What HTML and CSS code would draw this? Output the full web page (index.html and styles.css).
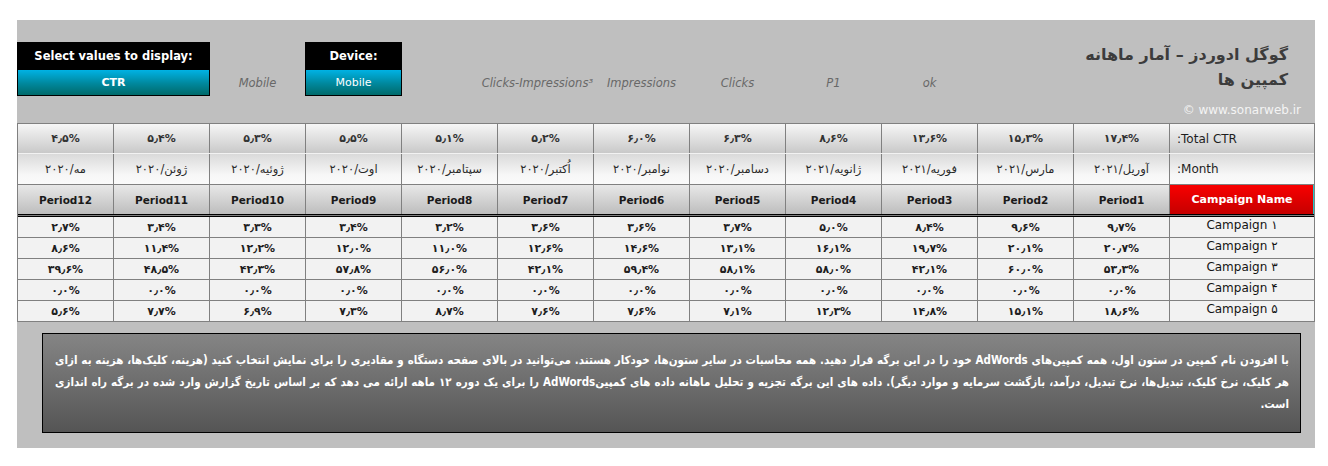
FILE: index.html
```html
<!DOCTYPE html>
<html lang="fa">
<head>
<meta charset="utf-8">
<title>گوگل ادوردز – آمار ماهانه کمپین ها</title>
<link rel="stylesheet" href="styles.css">
</head>
<body>
<div class="sheet">
  <div class="top" dir="rtl">
    <div class="title">گوگل ادوردز – آمار ماهانه<br>کمپین ها</div>
    <div class="copy" dir="ltr">© www.sonarweb.ir</div>
    <div class="lbl col-4">ok</div>
    <div class="lbl col-5">P1</div>
    <div class="lbl col-6">Clicks</div>
    <div class="lbl col-7">Impressions</div>
    <div class="lbl col-8" dir="rtl"><span dir="ltr">Clicks-Impressions³</span></div>
    <div class="ctl ctl-device" dir="ltr">
      <div class="ctl-h">Device:</div>
      <div class="ctl-v ctl-v-reg">Mobile</div>
    </div>
    <div class="lbl col-11">Mobile</div>
    <div class="ctl ctl-select" dir="ltr">
      <div class="ctl-h">Select values to display:</div>
      <div class="ctl-v">CTR</div>
    </div>
  </div>

  <div class="tbl" dir="rtl">
    <div class="row r-total">
      <div class="c lab" dir="rtl">Total CTR:</div>
      <div class="c n">۱۷٫۴%</div><div class="c n">۱۵٫۳%</div><div class="c n">۱۳٫۶%</div><div class="c n">۸٫۶%</div><div class="c n">۶٫۳%</div><div class="c n">۶٫۰%</div><div class="c n">۵٫۲%</div><div class="c n">۵٫۱%</div><div class="c n">۵٫۵%</div><div class="c n">۵٫۳%</div><div class="c n">۵٫۴%</div><div class="c n">۴٫۵%</div>
    </div>
    <div class="row r-month">
      <div class="c lab" dir="rtl">Month:</div>
      <div class="c m">آوریل/۲۰۲۱</div><div class="c m">مارس/۲۰۲۱</div><div class="c m">فوریه/۲۰۲۱</div><div class="c m">ژانویه/۲۰۲۱</div><div class="c m">دسامبر/۲۰۲۰</div><div class="c m">نوامبر/۲۰۲۰</div><div class="c m">اُکتبر/۲۰۲۰</div><div class="c m">سپتامبر/۲۰۲۰</div><div class="c m">اوت/۲۰۲۰</div><div class="c m">ژوئیه/۲۰۲۰</div><div class="c m">ژوئن/۲۰۲۰</div><div class="c m">مه/۲۰۲۰</div>
    </div>
    <div class="row r-head">
      <div class="c cname">Campaign Name</div>
      <div class="c p">Period1</div><div class="c p">Period2</div><div class="c p">Period3</div><div class="c p">Period4</div><div class="c p">Period5</div><div class="c p">Period6</div><div class="c p">Period7</div><div class="c p">Period8</div><div class="c p">Period9</div><div class="c p">Period10</div><div class="c p">Period11</div><div class="c p">Period12</div>
    </div>
    <div class="row r-data">
      <div class="c camp" dir="ltr">Campaign ۱</div>
      <div class="c d">۹٫۷%</div><div class="c d">۹٫۶%</div><div class="c d">۸٫۴%</div><div class="c d">۵٫۰%</div><div class="c d">۳٫۷%</div><div class="c d">۳٫۶%</div><div class="c d">۳٫۶%</div><div class="c d">۳٫۲%</div><div class="c d">۳٫۴%</div><div class="c d">۳٫۳%</div><div class="c d">۳٫۴%</div><div class="c d">۲٫۷%</div>
    </div>
    <div class="row r-data">
      <div class="c camp" dir="ltr">Campaign ۲</div>
      <div class="c d">۲۰٫۷%</div><div class="c d">۲۰٫۱%</div><div class="c d">۱۹٫۷%</div><div class="c d">۱۶٫۱%</div><div class="c d">۱۳٫۱%</div><div class="c d">۱۴٫۶%</div><div class="c d">۱۲٫۶%</div><div class="c d">۱۱٫۰%</div><div class="c d">۱۲٫۰%</div><div class="c d">۱۲٫۲%</div><div class="c d">۱۱٫۴%</div><div class="c d">۸٫۶%</div>
    </div>
    <div class="row r-data">
      <div class="c camp" dir="ltr">Campaign ۳</div>
      <div class="c d">۵۳٫۳%</div><div class="c d">۶۰٫۰%</div><div class="c d">۴۲٫۱%</div><div class="c d">۵۸٫۰%</div><div class="c d">۵۸٫۱%</div><div class="c d">۵۹٫۴%</div><div class="c d">۴۲٫۱%</div><div class="c d">۵۶٫۰%</div><div class="c d">۵۷٫۸%</div><div class="c d">۴۲٫۳%</div><div class="c d">۴۸٫۵%</div><div class="c d">۳۹٫۶%</div>
    </div>
    <div class="row r-data">
      <div class="c camp" dir="ltr">Campaign ۴</div>
      <div class="c d">۰٫۰%</div><div class="c d">۰٫۰%</div><div class="c d">۰٫۰%</div><div class="c d">۰٫۰%</div><div class="c d">۰٫۰%</div><div class="c d">۰٫۰%</div><div class="c d">۰٫۰%</div><div class="c d">۰٫۰%</div><div class="c d">۰٫۰%</div><div class="c d">۰٫۰%</div><div class="c d">۰٫۰%</div><div class="c d">۰٫۰%</div>
    </div>
    <div class="row r-data">
      <div class="c camp" dir="ltr">Campaign ۵</div>
      <div class="c d">۱۸٫۶%</div><div class="c d">۱۵٫۱%</div><div class="c d">۱۴٫۸%</div><div class="c d">۱۲٫۳%</div><div class="c d">۷٫۱%</div><div class="c d">۷٫۶%</div><div class="c d">۷٫۶%</div><div class="c d">۸٫۷%</div><div class="c d">۷٫۳%</div><div class="c d">۶٫۹%</div><div class="c d">۷٫۷%</div><div class="c d">۵٫۶%</div>
    </div>
  </div>

  <div class="note" dir="rtl">با افزودن نام کمپین در ستون اول، همه کمپین‌های AdWords خود را در این برگه قرار دهید. همه محاسبات در سایر ستون‌ها، خودکار هستند. می‌توانید در بالای صفحه دستگاه و مقادیری را برای نمایش انتخاب کنید (هزینه، کلیک‌ها، هزینه به ازای هر کلیک، نرخ کلیک، تبدیل‌ها، نرخ تبدیل، درآمد، بازگشت سرمایه و موارد دیگر). داده های این برگه تجزیه و تحلیل ماهانه داده های کمپینAdWords را برای یک دوره ۱۲ ماهه ارائه می دهد که بر اساس تاریخ گزارش وارد شده در برگه راه اندازی است.</div>
</div>
</body>
</html>
```

FILE: styles.css
```css
html, body {
  margin: 0;
  padding: 0;
  background: #ffffff;
}

.sheet {
  margin: 20px 0 0 17px;
  width: 1298px;
  height: 428px;
  background: #bfbfbf;
  font-family: "DejaVu Sans", "Noto Sans", sans-serif;
  overflow: hidden;
}

/* ---------- top area ---------- */
.top {
  display: grid;
  direction: rtl;
  grid-template-columns: 144px repeat(12, 95px);
  grid-template-rows: 22px 28px 26px 27px;
  column-gap: 1px;
  padding: 0 1px;
  height: 103px;
  box-sizing: border-box;
}

.title {
  grid-column: 1 / 5;
  grid-row: 2 / 4;
  padding-right: 26px;
  font-weight: bold;
  font-size: 16px;
  line-height: 25px;
  color: #3c3c3c;
  white-space: nowrap;
}

.copy {
  grid-column: 1 / 3;
  grid-row: 4;
  justify-self: right;
  align-self: center;
  margin-right: 13px;
  font-size: 12px;
  color: #f4f4f4;
  white-space: nowrap;
}

.lbl {
  grid-row: 3;
  align-self: center;
  text-align: center;
  font-size: 11.5px;
  font-style: italic;
  color: #686868;
  white-space: nowrap;
}
.col-4 { grid-column: 4; }
.col-5 { grid-column: 5; }
.col-6 { grid-column: 6; }
.col-7 { grid-column: 7; }
.col-8 { grid-column: 8; }
.col-11 { grid-column: 11; }

.ctl {
  grid-row: 2 / 4;
  display: grid;
  grid-template-rows: 27px 25px;
  border: 1px solid #000;
  background: #000;
  margin: 0 -1px;
  text-align: center;
  color: #ffffff;
}
.ctl-select { grid-column: 12 / 14; }
.ctl-device { grid-column: 10; }

.ctl-h {
  font-weight: bold;
  font-size: 11.5px;
  line-height: 27px;
}
.ctl-v {
  background: linear-gradient(#00b2e4, #00879c 55%, #006a6a);
  font-weight: bold;
  font-size: 11px;
  line-height: 25px;
}
.ctl-v-reg {
  font-weight: normal;
}

/* ---------- table ---------- */
.tbl {
  direction: rtl;
  border: 1px solid #808080;
  border-bottom: 0;
}

.row {
  display: grid;
  grid-template-columns: 144px repeat(12, 95px);
  column-gap: 1px;
  background: #808080;
  border-bottom: 1px solid #808080;
}

.c {
  display: flex;
  align-items: center;
  justify-content: center;
  white-space: nowrap;
  overflow: hidden;
}

.r-total { height: 29px; border-bottom-color: #f2f2f2; }
.r-total .c { background: linear-gradient(#f6f6f6, #c9c9c9); }

.r-month { height: 30px; }
.r-month .c { background: linear-gradient(#dadada, #f7f7f7 70%, #fafafa); }

.r-head { height: 29px; border-bottom: 3px double #000; }
.r-head .c { background: linear-gradient(#e8e8e8, #bdbdbd); }

.r-data { height: 20px; }
.r-data .c { background: #f2f2f2; }

.lab {
  justify-content: flex-end;
  padding-left: 7px;
  font-size: 12px;
  color: #1e1e1e;
}

.n {
  direction: ltr;
  font-weight: bold;
  font-size: 11px;
  color: #333333;
}

.m {
  font-size: 11.5px;
  color: #2a2a2a;
}

.p {
  font-weight: bold;
  font-size: 10.5px;
  color: #1a1a1a;
}

.r-head .cname {
  background: linear-gradient(#f80000, #c60000);
  color: #ffffff;
  font-weight: bold;
  font-size: 11px;
  box-shadow: inset -1px 0 0 #1fc7c7;
}

.d {
  direction: ltr;
  font-weight: bold;
  font-size: 11px;
  color: #1e1e1e;
}

.camp {
  align-items: flex-start;
  font-size: 12px;
  line-height: 17px;
  color: #141414;
}

/* ---------- note ---------- */
.note {
  margin: 11px 14px 0 25px;
  height: 100px;
  box-sizing: border-box;
  border: 1px solid #000;
  background: linear-gradient(#858585, #555555);
  padding: 15px 11px 0 12px;
  color: #ffffff;
  font-family: "DejaVu Sans Condensed", "DejaVu Sans", sans-serif;
  font-weight: bold;
  font-size: 11.5px;
  line-height: 22px;
  text-align: justify;
  text-align-last: right;
}
```
